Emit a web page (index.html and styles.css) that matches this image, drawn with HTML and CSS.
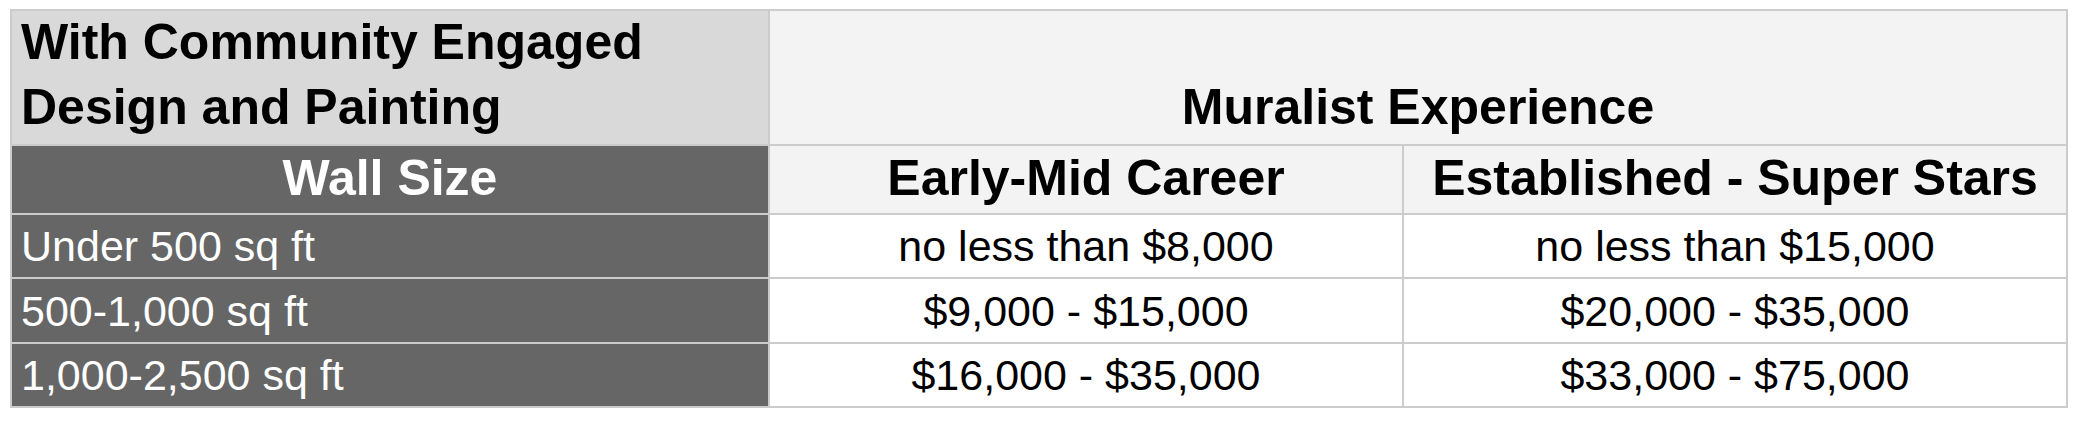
FILE: index.html
```html
<!DOCTYPE html>
<html lang="en">
<head>
<meta charset="utf-8">
<title>Mural Pricing</title>
<link rel="stylesheet" href="styles.css">
</head>
<body>
<div class="sheet">
  <div class="cell title">With Community Engaged<br>Design and Painting</div>
  <div class="cell group center">Muralist Experience</div>

  <div class="cell side head center">Wall Size</div>
  <div class="cell sub center">Early-Mid Career</div>
  <div class="cell sub center">Established - Super Stars</div>

  <div class="cell side">Under 500 sq ft</div>
  <div class="cell data center">no less than $8,000</div>
  <div class="cell data center">no less than $15,000</div>

  <div class="cell side">500-1,000 sq ft</div>
  <div class="cell data center">$9,000 - $15,000</div>
  <div class="cell data center">$20,000 - $35,000</div>

  <div class="cell side">1,000-2,500 sq ft</div>
  <div class="cell data center">$16,000 - $35,000</div>
  <div class="cell data center">$33,000 - $75,000</div>
</div>
</body>
</html>
```
FILE: styles.css
```css
html, body {
  background: #ffffff;
}

body {
  margin: 9px 0 0 10px;
  font-family: "Liberation Sans", Arial, sans-serif;
  color: #000000;
}

.sheet {
  display: grid;
  grid-template-columns: 756px 632px 662px;
  grid-template-rows: 133px 67px 62px 63px 62px;
  gap: 2px;
  padding: 2px;
  background: #cccccc;
  width: max-content;
}

.cell {
  display: flex;
  align-items: flex-end;
  padding: 0 9px 9px;
  font-size: 43px;
  line-height: 1;
  white-space: nowrap;
  box-sizing: border-box;
}

.center {
  justify-content: center;
  text-align: center;
}

.title {
  background: #d9d9d9;
  font-weight: bold;
  font-size: 50px;
  line-height: 65px;
  padding-bottom: 4px;
}

.group {
  grid-column: span 2;
  background: #f3f3f3;
  font-weight: bold;
  font-size: 50px;
  line-height: 65px;
  padding-bottom: 4px;
}

.side {
  background: #666666;
  color: #ffffff;
}

.head {
  font-weight: bold;
  font-size: 50px;
  padding-bottom: 10px;
}

.sub {
  background: #f3f3f3;
  font-weight: bold;
  font-size: 50px;
  padding-bottom: 10px;
}

.data {
  background: #ffffff;
}
```
